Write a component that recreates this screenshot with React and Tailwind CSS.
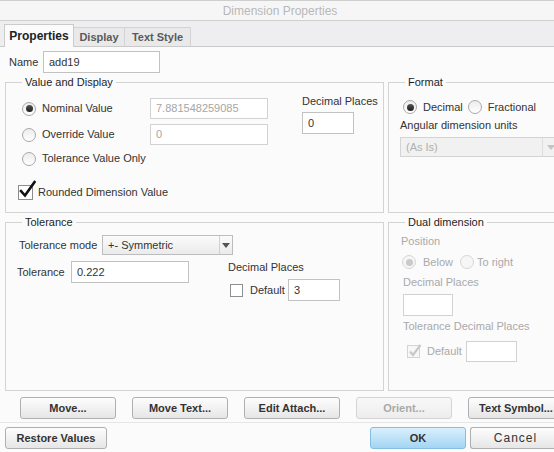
import React from "react";

const Radio = ({ checked, disabled }) => (
  <span
    className={
      disabled
        ? "flex h-[14px] w-[14px] shrink-0 items-center justify-center rounded-full border border-[#d6d6d6] bg-[#f6f6f6]"
        : "flex h-[14px] w-[14px] shrink-0 items-center justify-center rounded-full border border-[#a9a9a9] bg-gradient-to-b from-[#ececec] to-white"
    }
  >
    {checked && (
      <span
        className={
          disabled
            ? "h-[7px] w-[7px] rounded-full bg-[#cacaca]"
            : "h-[7px] w-[7px] rounded-full bg-gradient-to-b from-[#555] to-[#1e1e1e]"
        }
      />
    )}
  </span>
);

const Field = ({ w, h, children, disabled, className = "" }) => (
  <div
    className={
      (disabled
        ? "flex shrink-0 items-center border border-[#d2d2d2] bg-white pl-[5px] text-[#a6a6a6] "
        : "flex shrink-0 items-center border border-[#c2c2c2] bg-white pl-[5px] text-[#333] ") + className
    }
    style={{ width: w, height: h }}
  >
    {children}
  </div>
);

const Arrow = ({ color }) => (
  <svg width="8" height="5" viewBox="0 0 8 5">
    <path d="M0 0 H8 L4 5 Z" fill={color} />
  </svg>
);

const Btn = ({ children, w, disabled, primary, className = "" }) => {
  let cls =
    "flex h-[22px] shrink-0 items-center justify-center rounded-[3px] border text-[11px] font-bold ";
  if (primary) cls += "border-[#86bde0] bg-gradient-to-b from-[#d9f0fd] to-[#a3d5f2] text-[#333] ";
  else if (disabled) cls += "border-[#d4d4d4] bg-gradient-to-b from-[#f8f8f8] to-[#ededed] text-[#a9a9a9] ";
  else cls += "border-[#afafaf] bg-gradient-to-b from-[#fdfdfd] to-[#e6e6e6] text-[#333] ";
  return (
    <div className={cls + className} style={{ width: w }}>
      {children}
    </div>
  );
};

const Group = ({ title, children }) => (
  <fieldset className="m-0 h-full min-w-0 border border-[#d3d3d3] p-0">
    <legend className="ml-[16px] px-[3px] text-[11px] leading-[14px] text-[#1e1e1e]">{title}</legend>
    {children}
  </fieldset>
);

export default function App() {
  return (
    <div className="flex h-[452px] w-[554px] flex-col overflow-hidden bg-[#fbfbfc] font-['Liberation_Sans',Arial,sans-serif] text-[11px] text-[#333]">
      {/* title bar */}
      <div className="flex h-[21px] shrink-0 items-center justify-center border-y border-[#cfcfcf] bg-[#f6f6f7] pl-[6px] text-[12px] text-[#b8b8b8]">
        Dimension Properties
      </div>

      {/* tabs */}
      <div className="flex h-[26px] shrink-0 items-end border-b border-[#c9c9c9] bg-[#eeeef0] pl-[4px]">
        <div className="-mb-px flex h-[23px] w-[70px] items-center justify-center border border-b-0 border-[#cbcbcb] bg-[#fbfbfc] pb-px text-[12px] font-bold text-[#222]">
          Properties
        </div>
        <div className="flex h-[19px] w-[51px] items-center justify-center border border-b-0 border-l-0 border-[#d3d3d3] bg-[#e9e9ea] text-[11px] font-bold text-[#5a5a5a]">
          Display
        </div>
        <div className="flex h-[19px] w-[66px] items-center justify-center border border-b-0 border-l-0 border-[#d3d3d3] bg-[#e9e9ea] text-[11px] font-bold text-[#5a5a5a]">
          Text Style
        </div>
      </div>

      {/* name row */}
      <div className="mt-[4px] flex h-[22px] shrink-0 items-center pl-[9px]">
        <span className="w-[34px]">Name</span>
        <Field w={117} h={22}>add19</Field>
      </div>

      {/* groups */}
      <div className="mt-[2px] grid shrink-0 grid-cols-[379px_175px] grid-rows-[138px_176px] gap-x-[4px] gap-y-[2px] pl-[5px]">
        {/* Value and Display */}
        <Group title="Value and Display">
          <div className="flex pl-[16px] pt-[9px]">
            <div className="flex flex-col">
              <div className="flex h-[21px] items-center">
                <div className="flex w-[128px] items-center gap-[6px]">
                  <Radio checked />
                  <span>Nominal Value</span>
                </div>
                <Field w={118} h={21} disabled>7.881548259085</Field>
              </div>
              <div className="mt-[5px] flex h-[21px] items-center">
                <div className="flex w-[128px] items-center gap-[6px]">
                  <Radio />
                  <span>Override Value</span>
                </div>
                <Field w={118} h={21} disabled>0</Field>
              </div>
              <div className="mt-[3px] flex h-[21px] items-center gap-[6px]">
                <Radio />
                <span>Tolerance Value Only</span>
              </div>
              <div className="-ml-[4px] mt-[16px] flex h-[15px] items-center gap-[5px]">
                <span className="relative h-[15px] w-[15px] shrink-0 border border-[#8c8c8c] bg-white">
                  <svg className="absolute -top-[6px] left-[0px]" width="17" height="19" viewBox="0 0 17 19">
                    <path d="M2 11 L6 15.5 L15.5 2" fill="none" stroke="#111" strokeWidth="2.6" strokeLinecap="square" />
                  </svg>
                </span>
                <span>Rounded Dimension Value</span>
              </div>
            </div>
            <div className="-mt-[3px] ml-[34px] flex flex-col">
              <span className="leading-[13px]">Decimal Places</span>
              <Field w={52} h={22} className="mt-[4px]">0</Field>
            </div>
          </div>
        </Group>

        {/* Format */}
        <Group title="Format">
          <div className="flex flex-col pl-[11px]">
            <div className="mt-[11px] flex h-[14px] items-center pl-[3px]">
              <Radio checked />
              <span className="ml-[6px]">Decimal</span>
              <span className="ml-[5px]">
                <Radio />
              </span>
              <span className="ml-[6px]">Fractional</span>
            </div>
            <span className="mt-[5px] leading-[13px]">Angular dimension units</span>
            <div className="mt-[5px] flex h-[20px] w-[160px] items-center border border-[#d4d4d4] bg-[#f1f1f1] pl-[5px] text-[#b0b0b0]">
              <span className="flex-1">(As Is)</span>
              <div className="flex h-full w-[17px] items-center justify-center border-l border-[#dedede]">
                <Arrow color="#c4c4c4" />
              </div>
            </div>
          </div>
        </Group>

        {/* Tolerance */}
        <Group title="Tolerance">
          <div className="flex flex-col pl-[13px]">
            <div className="mt-[6px] flex h-[20px] items-center">
              <span className="w-[83px]">Tolerance mode</span>
              <div className="flex h-[20px] w-[131px] items-center border border-[#bdbdbd] bg-gradient-to-b from-[#fbfbfb] to-[#ebebeb] pl-[5px]">
                <span className="flex-1">+- Symmetric</span>
                <div className="flex h-full w-[13px] items-center justify-center border-l border-[#d0d0d0]">
                  <Arrow color="#555" />
                </div>
              </div>
            </div>
            <div className="mt-[6px] flex items-start">
              <div className="-ml-[2px] flex h-[22px] items-center">
                <span className="w-[54px]">Tolerance</span>
                <Field w={118} h={22}>0.222</Field>
              </div>
              <div className="ml-[39px] flex flex-col">
                <span className="leading-[13px]">Decimal Places</span>
                <div className="mt-[5px] flex h-[22px] items-center">
                  <span className="ml-[2px] h-[13px] w-[13px] shrink-0 border border-[#8f8f8f] bg-white" />
                  <span className="ml-[7px] w-[38px]">Default</span>
                  <Field w={52} h={22}>3</Field>
                </div>
              </div>
            </div>
          </div>
        </Group>

        {/* Dual dimension */}
        <Group title="Dual dimension">
          <div className="flex flex-col pl-[12px] text-[#a9a9a9]">
            <span className="mt-[6px] leading-[13px]">Position</span>
            <div className="mt-[7px] flex h-[14px] items-center pl-[1px]">
              <Radio checked disabled />
              <span className="ml-[7px]">Below</span>
              <span className="ml-[7px]">
                <Radio disabled />
              </span>
              <span className="ml-[3px]">To right</span>
            </div>
            <span className="ml-[2px] mt-[7px] leading-[13px]">Decimal Places</span>
            <div className="ml-[2px] mt-[5px] h-[22px] w-[50px] border border-[#d2d2d2] bg-white" />
            <span className="ml-[2px] mt-[4px] leading-[13px]">Tolerance Decimal Places</span>
            <div className="mt-[8px] flex h-[21px] items-center">
              <span className="relative ml-[6px] h-[13px] w-[13px] shrink-0 border border-[#d4d4d4] bg-[#f7f7f7]">
                <svg className="absolute -top-[3px] left-[0px]" width="14" height="15" viewBox="0 0 14 15">
                  <path d="M2 8.5 L5 12 L12.5 2" fill="none" stroke="#c8c8c8" strokeWidth="2.2" />
                </svg>
              </span>
              <span className="ml-[7px] w-[39px]">Default</span>
              <div className="h-[21px] w-[51px] border border-[#d2d2d2] bg-white" />
            </div>
          </div>
        </Group>
      </div>

      {/* action buttons */}
      <div className="mt-[6px] flex shrink-0 gap-[16px] pl-[20px]">
        <Btn w={96}>Move...</Btn>
        <Btn w={96}>Move Text...</Btn>
        <Btn w={96}>Edit Attach...</Btn>
        <Btn w={96} disabled>Orient...</Btn>
        <Btn w={96}>Text Symbol...</Btn>
      </div>

      <div className="mt-[3px] shrink-0 border-t border-[#e6e6e6]" />

      {/* bottom row */}
      <div className="mt-[4px] flex shrink-0 items-center pl-[5px]">
        <Btn w={102}>Restore Values</Btn>
        <div className="flex-1" />
        <Btn w={96} primary>OK</Btn>
        <div className="ml-[4px] flex h-[22px] w-[84px] shrink-0 items-center justify-center rounded-l-[3px] border border-r-0 border-[#afafaf] bg-gradient-to-b from-[#fdfdfd] to-[#e6e6e6] pl-[6px] text-[12px] tracking-[1px] text-[#333]">
          Cancel
        </div>
      </div>
    </div>
  );
}
